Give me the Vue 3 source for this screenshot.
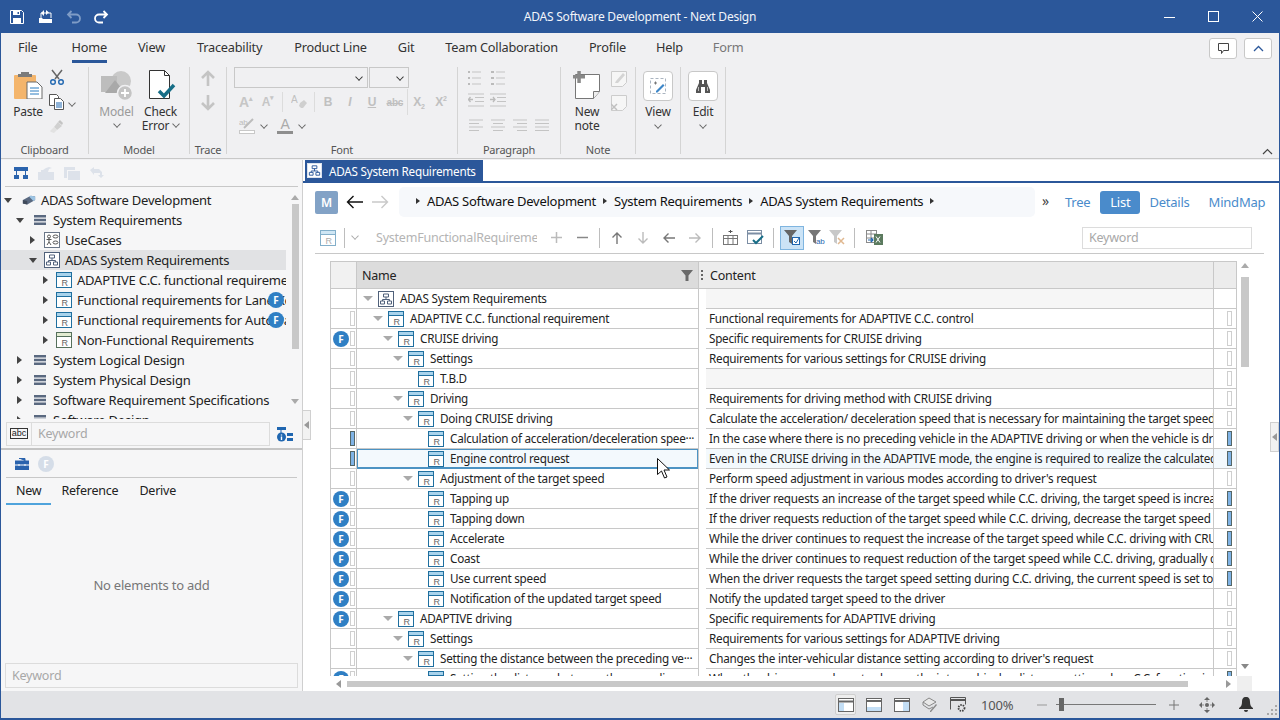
<script setup>
const tabs = ['File', 'Home', 'View', 'Traceability', 'Product Line', 'Git', 'Team Collaboration', 'Profile', 'Help', 'Form']

const tree = [
  { l: 0, icon: 'i-model', t: 'ADAS Software Development', a: 'down' },
  { l: 1, icon: 'i-list', t: 'System Requirements', a: 'down' },
  { l: 2, icon: 'i-usecase', t: 'UseCases', a: 'right' },
  { l: 2, icon: 'i-pkg', t: 'ADAS System Requirements', a: 'down', sel: true },
  { l: 3, icon: 'i-req', t: 'ADAPTIVE C.C. functional requirement', a: 'right' },
  { l: 3, icon: 'i-req', t: 'Functional requirements for Lane Keeping', a: 'right', f: true },
  { l: 3, icon: 'i-req', t: 'Functional requirements for Auto Parking', a: 'right', f: true },
  { l: 3, icon: 'i-reqg', t: 'Non-Functional Requirements', a: 'right' },
  { l: 1, icon: 'i-list', t: 'System Logical Design', a: 'right' },
  { l: 1, icon: 'i-list', t: 'System Physical Design', a: 'right' },
  { l: 1, icon: 'i-list', t: 'Software Requirement Specifications', a: 'right' },
  { l: 1, icon: 'i-list', t: 'Software Design', a: 'right' }
]

const rows = [
  { l: 0, n: 'ADAS System Requirements', c: '', arrow: 1, pkg: 1, noMark: 1 },
  { l: 1, n: 'ADAPTIVE C.C. functional requirement', c: 'Functional requirements for ADAPTIVE C.C. control', arrow: 1 },
  { l: 2, n: 'CRUISE driving', c: 'Specific requirements for CRUISE driving', arrow: 1, f: 1 },
  { l: 3, n: 'Settings', c: 'Requirements for various settings for CRUISE driving', arrow: 1 },
  { l: 4, n: 'T.B.D', c: '' },
  { l: 3, n: 'Driving', c: 'Requirements for driving method with CRUISE driving', arrow: 1 },
  { l: 4, n: 'Doing CRUISE driving', c: 'Calculate the acceleration/ deceleration speed that is necessary for maintaining the target speed', arrow: 1 },
  { l: 5, n: 'Calculation of acceleration/deceleration spee···', c: 'In the case where there is no preceding vehicle in the ADAPTIVE driving or when the vehicle is driving', mark: 1, rmark: 1 },
  { l: 5, n: 'Engine control request', c: 'Even in the CRUISE driving in the ADAPTIVE mode, the engine is required to realize the calculated speed', mark: 1, rmark: 1, sel: 1 },
  { l: 4, n: 'Adjustment of the target speed', c: "Perform speed adjustment in various modes according to driver's request", arrow: 1 },
  { l: 5, n: 'Tapping up', c: 'If the driver requests an increase of the target speed while C.C. driving, the target speed is increased', f: 1, rmark: 1 },
  { l: 5, n: 'Tapping down', c: 'If the driver requests reduction of the target speed while C.C. driving, decrease the target speed by', f: 1, rmark: 1 },
  { l: 5, n: 'Accelerate', c: 'While the driver continues to request the increase of the target speed while C.C. driving with CRUISE', f: 1, rmark: 1 },
  { l: 5, n: 'Coast', c: 'While the driver continues to request reduction of the target speed while C.C. driving, gradually decrease', f: 1, rmark: 1 },
  { l: 5, n: 'Use current speed', c: 'When the driver requests the target speed setting during C.C. driving, the current speed is set to the', f: 1, rmark: 1 },
  { l: 5, n: 'Notification of the updated target speed', c: 'Notify the updated target speed to the driver', f: 1 },
  { l: 2, n: 'ADAPTIVE driving', c: 'Specific requirements for ADAPTIVE driving', arrow: 1, f: 1 },
  { l: 3, n: 'Settings', c: 'Requirements for various settings for ADAPTIVE driving', arrow: 1 },
  { l: 4, n: 'Setting the distance between the preceding ve···', c: "Changes the inter-vehicular distance setting according to driver's request", arrow: 1 },
  { l: 5, n: 'Setting the distance between the preceding', c: 'When the driver uses a lever to change the inter-vehicular distance setting when C.C. function is ON', f: 1, rmark: 1 }
]
</script>

<template>
  <div class="app">
    <svg class="defs" width="0" height="0" aria-hidden="true">
      <symbol id="i-req" viewBox="0 0 16 16">
        <rect x=".5" y=".5" width="15" height="15" fill="#fff" stroke="#1f6f9f" />
        <rect x="1" y="1" width="14" height="3.5" fill="#a9d3ec" />
        <path d="M1 4.5h14" stroke="#1f6f9f" />
        <text x="5.4" y="13.6" font-size="9" fill="#666" font-family="Liberation Sans">R</text>
      </symbol>
      <symbol id="i-reqg" viewBox="0 0 16 16">
        <rect x=".5" y=".5" width="15" height="15" fill="#fff" stroke="#55705c" />
        <rect x="1" y="1" width="14" height="3.5" fill="#e3ecd2" />
        <path d="M1 4.5h14" stroke="#55705c" />
        <text x="5.4" y="13.6" font-size="9" fill="#666" font-family="Liberation Sans">R</text>
      </symbol>
      <symbol id="i-pkg" viewBox="0 0 16 16">
        <rect x=".5" y=".5" width="15" height="15" fill="#fff" stroke="#50617a" />
        <path d="M5.5 3h5v3h-5zM2.5 10h4v3h-4zM9.5 10h4v3h-4zM8 6v2.5M4.5 10V8.5h7V10" fill="none" stroke="#50617a" />
      </symbol>
      <symbol id="i-list" viewBox="0 0 14 14">
        <path d="M1 2h12v2.4H1zM1 5.8h12v2.4H1zM1 9.6h12V12H1z" fill="#5a6980" />
      </symbol>
      <symbol id="i-usecase" viewBox="0 0 16 16">
        <rect x=".5" y=".5" width="15" height="15" fill="#fff" stroke="#6a7688" />
        <circle cx="5" cy="4.5" r="1.5" fill="none" stroke="#555" />
        <path d="M2.5 7.5h5M5 6v4M3 13l2-3 2 3" fill="none" stroke="#555" />
        <ellipse cx="11.5" cy="4.5" rx="2.5" ry="1.5" fill="none" stroke="#555" />
        <ellipse cx="11.5" cy="10.5" rx="2.5" ry="1.5" fill="none" stroke="#555" />
      </symbol>
      <symbol id="i-model" viewBox="0 0 16 16">
        <path d="M1 8l9-5 5 1v4l-9 5-5-1z" fill="#5a6980" />
        <path d="M8 4l2-1 5 1v4l-2 1z" fill="#9cc4e4" />
        <path d="M1 8l5 1v4l-5-1z" fill="#404a5a" />
      </symbol>
    </svg>

    <header class="title">
      <div class="qa">
        <svg class="save" width="14" height="14" viewBox="0 0 14 14"><path d="M.5.5h11l2 2v11H.5z" fill="none" stroke="#fff" /><path d="M3 1h7v4H3zM3 8h8v5H3z" fill="#fff" /><path d="M7.500 2h1.500v2H7.500z" fill="#2b579a" /></svg>
        <svg width="15" height="14" viewBox="0 0 15 14"><path d="M1 8h3l1 1h9v4H1z" fill="#fff" /><path d="M3 8V3h5M10 3h3v5" fill="none" stroke="#fff" /><path d="M3 3l3-3v6z M8 0v5l3-2.500z" fill="#fff" /></svg>
        <svg class="dim" width="15" height="14" viewBox="0 0 15 14"><path d="M2 4.500h8a4 4 0 0 1 0 8H6M5.500 1L2 4.500 5.500 8" fill="none" stroke="#7f9cc6" stroke-width="1.800" /></svg>
        <svg width="15" height="14" viewBox="0 0 15 14"><path d="M13 4.500H5a4 4 0 0 0 0 8h4M9.500 1L13 4.500 9.500 8" fill="none" stroke="#fff" stroke-width="1.800" /></svg>
      </div>
      <div class="title-text">ADAS Software Development - Next Design</div>
      <div class="win">
        <svg width="11" height="11" viewBox="0 0 11 11"><path d="M0 6.500h11" stroke="#fff" /></svg>
        <svg width="11" height="11" viewBox="0 0 11 11"><rect x=".5" y=".5" width="10" height="10" fill="none" stroke="#fff" /></svg>
        <svg width="11" height="11" viewBox="0 0 11 11"><path d="M.5.5l10 10M10.500.5l-10 10" stroke="#fff" /></svg>
      </div>
    </header>

    <nav class="tabs">
      <span v-for="t in tabs" :key="t" class="tab" :class="{ on: t === 'Home', off: t === 'Form' }">{{ t }}</span>
      <span class="tabs-right">
        <button class="mini"><svg width="13" height="13" viewBox="0 0 13 13"><path d="M1.500 1.500h10v7h-5l-2 3v-3h-3z" fill="#fff" stroke="#444" /></svg></button>
        <button class="mini"><svg width="11" height="7" viewBox="0 0 11 7"><path d="M1 6l4.500-4.500L10 6" fill="none" stroke="#2b579a" stroke-width="1.300" /></svg></button>
      </span>
    </nav>

    <section class="ribbon">
      <div class="rg clip">
        <div class="rg-body">
          <div class="big paste">
            <svg width="29" height="29" viewBox="0 0 29 29"><rect x="0" y="5" width="22" height="24" rx="1" fill="#f4b56c" /><path d="M7 2h8v2h3v3H4V4h3z" fill="#7b7b7b" /><path d="M13 12h10l5 5v12H13z" fill="#fff" stroke="#6b6b6b" /><path d="M16 18h9M16 21h9M16 24h9" stroke="#2b7cc0" /></svg>
            <span>Paste</span>
          </div>
          <div class="small-col">
            <svg width="16" height="16" viewBox="0 0 16 16"><path d="M3 1l7 9M13 1L6 10" stroke="#666" stroke-width="1.500" /><circle cx="4" cy="13" r="2.300" fill="none" stroke="#1f66b0" stroke-width="1.400" /><circle cx="12" cy="13" r="2.300" fill="none" stroke="#1f66b0" stroke-width="1.400" /></svg>
            <span class="with-chev"><svg width="16" height="16" viewBox="0 0 16 16"><path d="M.5.5h7l2 2v9H.5z" fill="#fff" stroke="#555" /><path d="M5.500 4.500h6l3 3v8h-9z" fill="#fff" stroke="#555" /><path d="M7 9h6M7 11h6M7 13h6" stroke="#1f66b0" /></svg><i class="chev"></i></span>
            <svg width="16" height="16" viewBox="0 0 16 16"><path d="M9 3l4 4-5 4-3-3z" fill="#d0d0d0" /><path d="M5 8l3 3-3 3-3-1-1-1z" fill="#e2e2e2" /><path d="M11 1l3 3-1 2-4-3z" fill="#c4c4c4" /></svg>
          </div>
        </div>
        <div class="rg-label">Clipboard</div>
      </div>

      <div class="rg model">
        <div class="rg-body">
          <div class="big dis">
            <svg width="32" height="32" viewBox="0 0 32 32"><circle cx="20" cy="12" r="10" fill="#c9c9c9" /><path d="M0 7h16v16H0z" fill="#bdbdbd" /><path d="M14 11l10 13H4z" fill="#a9a9a9" /><circle cx="24" cy="24" r="7.500" fill="#c4c4c4" stroke="#f0f0f2" stroke-width="1.500" /><path d="M24 20v8M20 24h8" stroke="#fff" stroke-width="1.800" /></svg>
            <span>Model</span><i class="chev"></i>
          </div>
          <div class="big check">
            <svg width="30" height="32" viewBox="0 0 30 32"><path d="M3.500 1.500h15l5 5v23h-20z" fill="#fff" stroke="#333" /><path d="M18.500 1.500v5h5" fill="none" stroke="#333" /><path d="M13 22l5 5 10-11" fill="none" stroke="#176e87" stroke-width="3.500" /></svg>
            <span>Check</span><span class="err">Error <i class="chev inl"></i></span>
          </div>
        </div>
        <div class="rg-label">Model</div>
      </div>

      <div class="rg trace">
        <div class="rg-body">
          <div class="arrows">
            <svg width="14" height="17" viewBox="0 0 14 17"><path d="M7 16V2M1 8l6-6 6 6" fill="none" stroke="#c4c4c4" stroke-width="2.600" /></svg>
            <svg width="14" height="17" viewBox="0 0 14 17"><path d="M7 1v14M1 9l6 6 6-6" fill="none" stroke="#c4c4c4" stroke-width="2.600" /></svg>
          </div>
        </div>
        <div class="rg-label">Trace</div>
      </div>

      <div class="rg font">
        <div class="rg-body col">
          <div class="combos">
            <div class="combo c1"><i class="chev dark"></i></div>
            <div class="combo c2"><i class="chev dark"></i></div>
          </div>
          <div class="frow">
            <span class="gly big-a">A<sup>▴</sup></span>
            <span class="gly small-a">A<sup>▾</sup></span>
            <span class="vsep"></span>
            <svg class="eraser" width="16" height="16" viewBox="0 0 16 16"><path d="M9 9l4-3 3 3-4 5h-2l-2-2z" fill="#cfcfcf" /><text x="0" y="9" font-size="10" fill="#c0c0c0" font-family="Liberation Sans">A</text></svg>
            <span class="vsep v2"></span>
            <b class="fmt">B</b><em class="fmt">I</em><u class="fmt">U</u><s class="fmt abc">abc</s>
            <span class="fmt">X<sub>2</sub></span><span class="fmt">X<sup>2</sup></span>
          </div>
          <div class="frow third">
            <svg width="16" height="16" viewBox="0 0 16 16"><text x="0" y="7" font-size="8" fill="#bcbcbc" font-family="Liberation Sans">ab</text><path d="M5 10l9-9" stroke="#bcbcbc" stroke-width="2" /><rect x=".5" y="12.500" width="15" height="3" fill="#fff" stroke="#c8c8c8" /></svg>
            <i class="chev"></i>
            <span class="font-color"><span>A</span><i></i></span>
            <i class="chev"></i>
          </div>
        </div>
        <div class="rg-label">Font</div>
      </div>

      <div class="rg para">
        <div class="rg-body col">
          <div class="prow p1">
            <svg width="14" height="16" viewBox="0 0 14 16"><path d="M0 2h2M0 8h2M0 14h2" stroke="#bbb" stroke-width="2" /><path d="M4 2h9M4 8h9M4 14h9" stroke="#c4c4c4" /></svg>
            <svg width="14" height="16" viewBox="0 0 14 16"><path d="M0 2h3M0 8h3M0 14h3" stroke="#bbb" stroke-width="2" /><path d="M5 2h9M5 8h9M5 14h9" stroke="#c4c4c4" /></svg>
          </div>
          <div class="prow p2">
            <svg width="16" height="14" viewBox="0 0 16 14"><path d="M0 1h16M7 4.500h9M7 8.500h9M0 13h16" stroke="#c4c4c4" /><path d="M5 6.500H0M2.500 4l-2 2.500 2 2.500" fill="none" stroke="#bbb" stroke-width="1.300" /></svg>
            <svg width="16" height="14" viewBox="0 0 16 14"><path d="M0 1h16M7 4.500h9M7 8.500h9M0 13h16" stroke="#c4c4c4" /><path d="M0 6.500h5M3 4l2 2.500L3 9" fill="none" stroke="#bbb" stroke-width="1.300" /></svg>
          </div>
          <div class="prow aligns">
            <svg v-for="p in ['M0 1h14M0 4.500h10M0 8h14M0 11.500h10','M0 1h14M2 4.500h10M0 8h14M2 11.500h10','M0 1h14M4 4.500h10M0 8h14M4 11.500h10','M0 1h14M0 4.500h14M0 8h14M0 11.500h14']" :key="p" width="14" height="12" viewBox="0 0 14 12"><path :d="p" stroke="#c4c4c4" /></svg>
          </div>
        </div>
        <div class="rg-label">Paragraph</div>
      </div>

      <div class="rg note">
        <div class="rg-body">
          <div class="big">
            <svg width="28" height="28" viewBox="0 0 28 28"><path d="M2.500 3.500h24v17l-6 7h-18z" fill="#fff" stroke="#777" /><path d="M20.500 27.500v-7h6" fill="#eee" stroke="#777" /><path d="M0 4h12v3.500H0z M4.300 0h3.500v12H4.300z" fill="#888" /></svg>
            <span>New</span><span>note</span>
          </div>
          <div class="note-small">
            <svg width="16" height="16" viewBox="0 0 16 16"><path d="M.5.500h15v11l-4 4H.5z" fill="#f6f6f6" stroke="#ccc" /><path d="M5 10l7-8 2 2-7 8H4z" fill="#d4d4d4" /></svg>
            <svg width="16" height="16" viewBox="0 0 16 16"><path d="M.5.500h15v11l-4 4H.5z" fill="#f6f6f6" stroke="#ccc" /><path d="M0 9l6 6M6 9l-6 6" stroke="#c0c0c0" stroke-width="1.500" /></svg>
          </div>
        </div>
        <div class="rg-label">Note</div>
      </div>

      <div class="rg drop">
        <div class="rg-body">
          <div class="big">
            <button class="drop-btn"><svg width="16" height="16" viewBox="0 0 16 16"><rect x=".5" y=".5" width="15" height="15" fill="none" stroke="#aab4c0" stroke-dasharray="3 2" /><path d="M4 5h3M5.500 3.500v3" stroke="#777" /><path d="M6 13l7-7 1.500 1.500-7 7H6z" fill="#3c86c8" /></svg></button>
            <span>View</span><i class="chev"></i>
          </div>
        </div>
      </div>

      <div class="rg drop">
        <div class="rg-body">
          <div class="big">
            <button class="drop-btn"><svg width="16" height="16" viewBox="0 0 16 16"><path d="M4 2h3v4h2V2h3v3l3 7v3h-5V9H6v6H1v-3l3-7z" fill="#555" /><path d="M3.500 9v4M12.500 9v4" stroke="#bbb" /></svg></button>
            <span>Edit</span><i class="chev"></i>
          </div>
        </div>
      </div>
      <svg class="collapse-up" width="11" height="7" viewBox="0 0 11 7"><path d="M1 6l4.500-4.500L10 6" fill="none" stroke="#444" stroke-width="1.200" /></svg>
    </section>

    <main class="main">
      <aside class="lpane">
        <div class="ltools">
          <svg width="14" height="13" viewBox="0 0 14 13"><path d="M0 0h14v4H0zM0 8h5v4H0zM9 8h5v4H9zM2 4h1v4H2zM11 4h1v4h-1z" fill="#2a63ad" /></svg>
          <svg width="16" height="14" viewBox="0 0 16 14"><path d="M0 6h3V4h2l3-2 3-1 3 1-3 1-1 3h6v8H0z" fill="#dde2ea" /></svg>
          <svg width="16" height="14" viewBox="0 0 16 14"><path d="M0 1h11v3H0zM0 4h3v8H0z" fill="#dde2ea" /><rect x="4" y="5" width="12" height="9" fill="#dde2ea" /></svg>
          <svg width="14" height="14" viewBox="0 0 14 14"><path d="M0 4l4-3v2h5l3 3v3h2l-3 3-3-3h2V7H4v2z" fill="#dde2ea" /></svg>
        </div>
        <div class="tree-wrap">
          <div class="tree">
            <div v-for="r in tree" :key="r.t" class="trow" :class="[`lv${r.l}`, { sel: r.sel }]">
              <i class="tri" :class="r.a"></i>
              <svg class="ticon" width="16" height="16"><use :href="`#${r.icon}`" /></svg>
              <span class="ttext">{{ r.t }}</span>
              <span v-if="r.f" class="fb tree-fb">F</span>
            </div>
          </div>
          <div class="vbar">
            <i class="tri up"></i><div class="thumb"></div><i class="tri down grey"></i>
          </div>
        </div>
        <div class="search">
          <div class="sbox">
            <span class="abc"><span>abc</span></span>
            <span class="ph">Keyword</span>
          </div>
          <svg width="16" height="16" viewBox="0 0 16 16"><path d="M0 1h9v3H0zM10 7h6v3h-6zM10 12h6v3h-6z" fill="#1f66b0" /><path d="M4 4v3" stroke="#1f66b0" /><circle cx="4.500" cy="11" r="4.500" fill="#1f66b0" /><path d="M4.500 8.500v1M4.500 10.500v3.500" stroke="#fff" stroke-width="1.400" /></svg>
        </div>
        <div class="ptools">
          <svg width="14" height="13" viewBox="0 0 14 13"><path d="M0 4h14v9H0zM4 1.500h6v2.500M0 8h14" fill="#2a63ad" stroke="#2a63ad" /><path d="M3 8h2M9 8h2M0 8h14" stroke="#fff" /></svg>
          <span class="fb faint">F</span>
        </div>
        <div class="ptabs">
          <span class="on">New</span><span>Reference</span><span>Derive</span>
        </div>
        <div class="empty">No elements to add</div>
        <div class="kw"><span class="ph">Keyword</span></div>
      </aside>

      <section class="rpane">
        <div class="doc-tabs"><div class="doc-tab">
          <svg width="15" height="15" viewBox="0 0 16 16"><rect x=".5" y=".5" width="15" height="15" fill="#fff" stroke="#dfe6f0" /><path d="M5.500 3h5v3h-5zM2.500 10h4v3h-4zM9.500 10h4v3h-4zM8 6v2.500M4.500 10V8.500h7V10" fill="none" stroke="#2b579a" /></svg>
          <span>ADAS System Requirements</span>
        </div></div>

        <div class="crumb-row">
          <span class="m">M</span>
          <svg class="nav-a" width="17" height="14" viewBox="0 0 17 14"><path d="M17 7H1.500M7.500 1l-6 6 6 6" fill="none" stroke="#111" stroke-width="1.400" /></svg>
          <svg class="nav-b" width="17" height="14" viewBox="0 0 17 14"><path d="M0 7h15.500M9.500 1l6 6-6 6" fill="none" stroke="#c9c9c9" stroke-width="1.400" /></svg>
          <div class="crumbs">
            <i class="tri right small"></i><span>ADAS Software Development</span>
            <i class="tri right small"></i><span>System Requirements</span>
            <i class="tri right small"></i><span>ADAS System Requirements</span>
            <i class="tri right small"></i>
          </div>
          <span class="more">»</span>
          <div class="views">
            <span class="tree-v">Tree</span><span class="pill">List</span><span class="det">Details</span><span class="mm">MindMap</span>
          </div>
        </div>

        <div class="toolbar">
          <svg class="tb-r" width="16" height="16"><use href="#i-req" opacity=".55" /></svg>
          <span class="tsep s1"></span>
          <i class="chev"></i>
          <span class="sf">SystemFunctionalRequireme</span>
          <svg class="pm plus" width="11" height="11" viewBox="0 0 11 11"><path d="M5.500 0v11M0 5.500h11" stroke="#bbb" stroke-width="1.500" /></svg>
          <svg class="pm minus" width="11" height="11" viewBox="0 0 11 11"><path d="M0 5.500h11" stroke="#888" stroke-width="1.500" /></svg>
          <span class="tsep s2"></span>
          <div class="arr">
            <svg width="12" height="12" viewBox="0 0 12 12"><path d="M6 12V1M1.500 5.500L6 1l4.500 4.500" fill="none" stroke="#777" stroke-width="1.400" /></svg>
            <svg width="12" height="12" viewBox="0 0 12 12"><path d="M6 0v11M1.500 6.500L6 11l4.500-4.500" fill="none" stroke="#bbb" stroke-width="1.400" /></svg>
            <svg width="12" height="12" viewBox="0 0 12 12"><path d="M12 6H1M5.500 1.500L1 6l4.500 4.500" fill="none" stroke="#777" stroke-width="1.400" /></svg>
            <svg width="12" height="12" viewBox="0 0 12 12"><path d="M0 6h11M6.500 1.500L11 6l-4.500 4.500" fill="none" stroke="#bbb" stroke-width="1.400" /></svg>
          </div>
          <span class="tsep s3"></span>
          <div class="t-ic">
            <svg width="15" height="15" viewBox="0 0 15 15"><path d="M7.500 0v3M5.500 1.500h4" stroke="#555" /><rect x=".5" y="5.500" width="14" height="9" fill="none" stroke="#777" /><path d="M.5 8.500h14M5 5.500v9M10 5.500v9" stroke="#777" /></svg>
            <svg width="17" height="15" viewBox="0 0 17 15"><rect x=".5" y=".5" width="14" height="13" fill="#fff" stroke="#7c8ea4" /><path d="M.5 3.500h14" stroke="#7c8ea4" stroke-width="2" /><path d="M6 10l3 3 7-7" fill="none" stroke="#176e87" stroke-width="2" /></svg>
          </div>
          <span class="tsep s4"></span>
          <div class="t-ic f">
            <span class="fsel"><svg width="17" height="15" viewBox="0 0 17 15"><path d="M0 0h13L8 6v8l-3-2V6z" fill="#666" /><rect x="8.500" y="7.500" width="7" height="7" fill="#fff" stroke="#1f66b0" /><path d="M10 11l2 2 3-5" fill="none" stroke="#1f66b0" /></svg></span>
            <svg width="17" height="15" viewBox="0 0 17 15"><path d="M0 0h13L8 6v8l-3-2V6z" fill="#777" /><text x="8" y="14" font-size="8" fill="#1f66b0" font-family="Liberation Sans">ab</text></svg>
            <svg width="17" height="15" viewBox="0 0 17 15"><path d="M0 0h13L8 6v8l-3-2V6z" fill="#c8c8c8" /><path d="M9 8l6 6M15 8l-6 6" stroke="#e0b890" stroke-width="1.500" /></svg>
          </div>
          <span class="tsep s5"></span>
          <svg class="xl" width="17" height="15" viewBox="0 0 17 15"><rect x=".5" y=".5" width="10" height="12" fill="#fff" stroke="#8a8a8a" /><path d="M.5 4h10M.5 8h10M5 .5v12" stroke="#8a8a8a" /><path d="M2 10h5M5 8l2 2-2 2" fill="none" stroke="#1f66b0" stroke-width="1.200" /><rect x="8" y="4" width="9" height="11" fill="#5b7a5e" /><path d="M10 6.500l4 6M14 6.500l-4 6" stroke="#fff" /></svg>
          <div class="kbox"><span class="ph">Keyword</span></div>
        </div>

        <div class="table-area">
          <div class="table-main">
            <div class="grid">
              <div class="ghead">
                <div class="h0"></div>
                <div class="h1"><span>Name</span><svg width="12" height="12" viewBox="0 0 12 12"><path d="M0 1h12L7.500 6.500V12h-3V6.500z" fill="#6a6a6a" /></svg></div>
                <div class="h2"><i></i><i></i><i></i></div>
                <div class="h3">Content</div>
                <div class="h4"></div>
              </div>
              <div class="gbody">
                <div v-for="(r, i) in rows" :key="i" class="grow" :class="{ sel: r.sel }">
                  <div class="c0">
                    <span v-if="r.f" class="fb">F</span>
                    <span v-if="!r.noMark" class="mark" :class="{ blue: r.mark }"></span>
                  </div>
                  <div class="c1n" :style="{ paddingLeft: 10 * r.l + 10 + 'px' }">
                    <span class="tri-slot"><i v-if="r.arrow" class="tgl"></i></span>
                    <svg width="16" height="16"><use :href="r.pkg ? '#i-pkg' : '#i-req'" /></svg>
                    <span class="nm">{{ r.n }}</span>
                  </div>
                  <div class="c2"></div>
                  <div class="c3" :class="{ blank: !r.c }"><span>{{ r.c }}</span></div>
                  <div class="c4"><span v-if="!r.noMark" class="mark" :class="{ blue: r.rmark }"></span></div>
                </div>
              </div>
            </div>
            <div class="tscroll">
              <i class="tri up grey"></i><div class="thumb"></div><i class="tri down dark"></i>
            </div>
          </div>
          <div class="hscroll">
            <i class="tri left grey"></i><div class="hthumb"></div><i class="tri right grey"></i><span class="corner"></span>
          </div>
        </div>
        <span class="side-btn"><i class="tri left grey"></i></span>
      </section>
      <span class="split-btn"><i class="tri left grey"></i></span>
    </main>

    <footer class="status">
      <span class="st-btn active"><svg width="16" height="14" viewBox="0 0 16 14"><rect x=".5" y=".5" width="15" height="13" fill="#fff" stroke="#666" /><path d="M.5 3.500h15" stroke="#666" stroke-width="2" /><rect x="1" y="5" width="5" height="8" fill="#c3def5" /></svg></span>
      <svg class="st2" width="16" height="14" viewBox="0 0 16 14"><rect x=".5" y=".5" width="15" height="13" fill="#fff" stroke="#666" /><path d="M.5 3h15" stroke="#666" stroke-width="2" /><rect x="1" y="9" width="14" height="4" fill="#c3def5" /></svg>
      <svg class="st3" width="16" height="14" viewBox="0 0 16 14"><rect x=".5" y=".5" width="15" height="13" fill="#fff" stroke="#666" /><path d="M.5 3h15" stroke="#666" stroke-width="2" /><rect x="9" y="4" width="6" height="9" fill="#c3def5" /></svg>
      <svg class="st4" width="16" height="16" viewBox="0 0 16 16"><path d="M1 5l6-4 7 4-7 4z" fill="#e8e8e8" stroke="#888" /><path d="M1 8l6 4 4-2M1 5v3" fill="none" stroke="#888" /><path d="M8 14l6-7 1 1-6 7H8z" fill="#888" /></svg>
      <svg class="st5" width="17" height="15" viewBox="0 0 17 15"><path d="M.5 12.500V.5h15v7" fill="none" stroke="#555" /><path d="M.5 3h15" stroke="#555" stroke-width="2" /><circle cx="11.500" cy="11" r="3" fill="none" stroke="#444" stroke-width="1.800" stroke-dasharray="1.500 1" /></svg>
      <span class="pct">100%</span>
      <svg class="zm" width="10" height="10" viewBox="0 0 10 10"><path d="M0 5h10" stroke="#999" /></svg>
      <span class="slider"><i></i></span>
      <svg class="zp" width="10" height="10" viewBox="0 0 10 10"><path d="M0 5h10M5 0v10" stroke="#777" /></svg>
      <svg class="st6" width="16" height="16" viewBox="0 0 16 16"><path d="M8 0l3 3H5zM8 16l-3-3h6zM0 8l3-3v6zM16 8l-3 3V5z" fill="#666" /><circle cx="8" cy="8" r="2" fill="#666" /><path d="M8 3v2M8 11v2M3 8h2M11 8h2" stroke="#888" /></svg>
      <svg class="st7" width="14" height="15" viewBox="0 0 14 15"><path d="M7 0c3 0 4 2 4 5s1 5 3 6v1H0v-1c2-1 3-3 3-6s1-5 4-5z" fill="#333" /><path d="M5 13h4a2 2 0 0 1-4 0z" fill="#333" /></svg>
      <svg class="grip" width="11" height="11" viewBox="0 0 11 11"><path d="M9 1h2v2H9zM5 5h2v2H5zM9 5h2v2H9zM1 9h2v2H1zM5 9h2v2H5zM9 9h2v2H9z" fill="#a8a8a8" /></svg>
    </footer>

    <svg class="cursor" width="13" height="21" viewBox="0 0 13 21"><path d="M.5.500v16l4-3.500 3 7 2.500-1-3-7h5.500z" fill="#fff" stroke="#111" /></svg>
  </div>
</template>

<style scoped>
.app { position: relative; width: 1280px; height: 720px; box-sizing: border-box; display: flex; flex-direction: column; border: solid #2b579a; border-width: 0 1px 2px 1px; background: #f0f0f2; overflow: hidden; font-family: "Noto Sans", sans-serif; font-size: 12px; letter-spacing: -.22px; color: #222; }
.defs { position: absolute; }
button { padding: 0; font: inherit; }
i { display: block; font-style: normal; }

.title { height: 33px; flex: none; background: #2b579a; display: grid; grid-template-columns: 1fr auto 1fr; align-items: center; color: #fff; }
.qa { display: flex; gap: 13px; padding-left: 9px; align-items: center; }
.qa svg { display: block; }
.qa .save { margin-right: 1px; }
.title-text { font-size: 12px; color: #f2f5fa; }
.win { display: flex; gap: 33px; justify-content: flex-end; align-items: center; padding-right: 16px; }

.tabs { height: 32px; flex: none; display: flex; align-items: flex-start; padding-left: 17px; gap: 31px; font-size: 12.750px; background: #f0f0f2; }
.tab { position: relative; line-height: 28px; color: #333; }
.tab:nth-child(2) { margin-left: 3px; }
.tab:nth-child(4) { margin-left: 1px; }
.tab:nth-child(5) { margin-left: 1px; }
.tab:nth-child(9) { margin-left: -1px; }
.tab:nth-child(10) { margin-left: -1px; }
.tab.off { color: #777; }
.tab.on::after { content: ""; position: absolute; left: 0; right: 0; bottom: -2px; height: 3px; background: #2b579a; }
.tabs-right { margin-left: auto; display: flex; gap: 7px; padding: 5px 7px 0 0; }
.mini { width: 28px; height: 21px; border: 1px solid #c8c8c8; border-radius: 3px; background: #fff; display: flex; align-items: center; justify-content: center; }

.ribbon { position: relative; height: 94px; flex: none; display: flex; border-bottom: 1px solid #c8c8c8; padding-top: 2px; box-sizing: border-box; }
.rg { display: flex; flex-direction: column; height: 87px; border-right: 1px solid #d4d4d4; box-sizing: border-box; flex: none; }
.rg-body { flex: 1; display: flex; min-height: 0; }
.rg-body.col { flex-direction: column; }
.rg-label { height: 11px; line-height: 14px; text-align: center; font-size: 11px; color: #555; }
.big { display: flex; flex-direction: column; align-items: center; font-size: 12px; line-height: 14px; color: #333; }
.big svg { display: block; flex: none; margin-bottom: 4px; }
.big.dis { color: #9a9a9a; }
.chev { width: 6px; height: 6px; box-sizing: border-box; border: solid #666; border-width: 0 1px 1px 0; transform: rotate(45deg) scale(.9); margin-top: 2px; flex: none; }
.chev.inl { display: inline-block; margin: 0 0 3px 1px; }
.chev.dark { border-color: #333; border-width: 0 1.5px 1.500px 0; }
.err { white-space: nowrap; }

.clip { width: 88px; padding-left: 12px; }
.paste { width: 30px; padding-top: 3px; }
.paste svg { margin-bottom: 6px; }
.small-col { display: flex; flex-direction: column; margin-left: 6px; padding-top: 2px; gap: 9px; }
.small-col svg { display: block; flex: none; }
.with-chev { display: flex; align-items: center; gap: 4px; }
.clip .rg-label { margin-left: -12px; }

.model { width: 101px; }
.model .rg-body { padding: 2px 0 0 11px; gap: 11px; }
.model .big { width: 33px; }
.check { width: 34px; }

.trace { width: 37px; }
.arrows { display: flex; flex-direction: column; gap: 7px; padding: 3px 0 0 11px; }
.arrows svg { display: block; }

.font { width: 231px; }
.font .rg-body { padding: 0 0 0 7px; }
.combos { display: flex; gap: 1px; flex: none; }
.combo { height: 21px; box-sizing: border-box; border: 1px solid #c8c8c8; display: flex; align-items: center; justify-content: flex-end; padding: 0 5px 3px 0; }
.combo.c1 { width: 134px; }
.combo.c2 { width: 40px; }
.frow { display: flex; align-items: center; height: 26px; margin-top: 1px; color: #c4c4c4; padding-left: 5px; flex: none; }
.gly { font-weight: 700; color: #c6c6c6; font-family: "Liberation Sans", sans-serif; line-height: 1; }
.gly sup { font-size: 7px; vertical-align: 6px; line-height: 0; }
.big-a { font-size: 14px; }
.small-a { font-size: 12px; margin-left: 9px; }
.vsep { width: 1px; height: 20px; background: #dcdcdc; margin: 0 8px 0 8px; flex: none; }
.vsep.v2 { margin: 0 2px 0 7px; }
.eraser { display: block; flex: none; }
.fmt { font-family: "Liberation Sans", sans-serif; font-size: 12px; font-weight: 700; width: 22px; text-align: center; color: #c0c0c0; flex: none; }
.fmt.abc { font-size: 10px; }
.fmt sub, .fmt sup { font-size: 7px; line-height: 0; }
.third { height: 22px; margin-top: 0; }
.third .chev { margin: 0 8px 2px 6px; }
.font-color { width: 16px; display: flex; flex-direction: column; align-items: center; margin-left: 2px; font-family: "Liberation Sans", sans-serif; font-size: 14px; line-height: 13px; color: #aaa; }
.font-color i { width: 16px; height: 3px; background: #8e8e8e; }

.para { width: 103px; }
.prow { display: flex; gap: 8px; padding-left: 10px; align-items: center; flex: none; }
.p1 { height: 21px; gap: 9px; }
.p2 { height: 24px; gap: 6px; }
.aligns { height: 26px; padding-left: 11px; }

.note { width: 75px; }
.note .rg-body { padding: 4px 0 0 12px; gap: 10px; }
.note .big { width: 28px; }
.note .big svg { margin-bottom: 6px; }
.note-small { display: flex; flex-direction: column; gap: 8px; }
.note-small svg { display: block; flex: none; }

.drop { width: 45px; }
.drop .big { width: 100%; padding-top: 4px; }
.drop .big .chev { margin-top: 3px; }
.drop-btn { width: 30px; height: 30px; flex: none; box-sizing: border-box; border: 1px solid #c8c8c8; border-radius: 4px; background: #fff; display: flex; align-items: center; justify-content: center; margin-bottom: 4px; }
.drop-btn svg { margin: 0; }
.collapse-up { position: absolute; right: 6px; bottom: 3px; }

.main { flex: 1; min-height: 0; display: flex; margin-top: 1px; position: relative; background: #fff; }
.lpane { width: 301px; flex: none; background: #f6f6f7; border-right: 1px solid #cfcfcf; display: flex; flex-direction: column; box-sizing: content-box; }
.ltools { height: 27px; margin: 0 4px 0 4px; border-bottom: 1px solid #c8c8c8; display: flex; align-items: center; gap: 10px; padding-left: 9px; box-sizing: border-box; flex: none; }
.tree-wrap { height: 232px; display: flex; flex: none; }
.tree { width: 286px; padding-top: 3px; overflow: hidden; }
.trow { height: 20px; display: flex; align-items: center; position: relative; white-space: nowrap; overflow: hidden; font-size: 13px; }
.trow.sel { background: #e1e2e4; }
.lv0 { padding-left: 3px; }
.lv1 { padding-left: 15px; }
.lv2 { padding-left: 28px; }
.lv3 { padding-left: 41px; }
.ticon { flex: none; display: block; margin-right: 5px; }
.lv0 .ticon { width: 14px; height: 14px; margin-left: 10px; }
.lv1 .ticon { width: 14px; height: 14px; margin-left: 9px; margin-right: 6px; }
.lv2 .ticon { margin-left: 7px; }
.lv3 .ticon { margin-left: 6px; }
.tri { width: 0; height: 0; flex: none; border-style: solid; border-color: transparent; }
.tri.right { border-width: 4px 0 4px 5px; border-left-color: #444; margin-right: 2px; margin-left: 1px; }
.tri.down { border-width: 5px 4px 0 4px; border-top-color: #444; margin-right: 0; }
.tri.left { border-width: 4px 5px 4px 0; border-right-color: #999; }
.tri.up { border-width: 0 4px 5px 4px; border-bottom-color: #aaa; }
.tri.grey.down { border-top-color: #aaa; }
.tri.grey.right { border-left-color: #999; }
.tri.dark.down { border-top-color: #888; }
.tri.small { border-width: 3px 0 3px 4px; border-left-color: #333; }
.ttext { flex: none; }
.fb { display: inline-flex; width: 16px; height: 16px; border-radius: 50%; background: #2f7fc4; color: #fff; align-items: center; justify-content: center; font-size: 10px; font-weight: 700; flex: none; letter-spacing: 0; }
.tree-fb { position: absolute; right: 2px; top: 2px; }
.faint { background: #d5dde8; color: #fff; }
.vbar { width: 16px; display: flex; flex-direction: column; align-items: center; padding: 8px 0 0 2px; box-sizing: border-box; }
.vbar .thumb { width: 7px; height: 145px; background: #c8c8c8; margin: 4px 0 50px; flex: none; }
.search { height: 29px; display: flex; align-items: center; gap: 7px; padding: 0 5px; border-bottom: 2px solid #c4c4c4; box-sizing: content-box; flex: none; }
.sbox { width: 264px; height: 24px; box-sizing: border-box; border: 1px solid #dcdcdc; display: flex; align-items: center; background: #f6f6f7; margin-right: 0; flex: none; }
.abc { width: 24px; height: 100%; display: flex; align-items: center; justify-content: center; border-right: 1px solid #dcdcdc; font-size: 9px; flex: none; }
.abc span { border: 1px solid #333; padding: 0 1px; line-height: 9px; font-family: "Liberation Sans", sans-serif; letter-spacing: 0; }
.ph { color: #a8a8a8; font-size: 12.500px; padding-left: 6px; }
.ptools { height: 28px; margin: 0 5px; display: flex; align-items: center; gap: 9px; padding-left: 9px; border-bottom: 1px solid #c8c8c8; box-sizing: border-box; flex: none; }
.ptabs { height: 27px; display: flex; padding-left: 5px; flex: none; font-size: 12.500px; align-items: stretch; }
.ptabs span { padding: 4px 10px 0; box-sizing: border-box; margin-right: 1px; }
.ptabs .on { border-bottom: 2px solid #4fa3dc; padding: 4px 10px 0; margin-right: 0; }
.empty { flex: 1; display: flex; align-items: center; justify-content: center; color: #777; font-size: 13px; padding-top: 2px; }
.kw { height: 25px; margin: 0 4px 3px; box-sizing: border-box; border: 1px solid #dcdcdc; display: flex; align-items: center; flex: none; }

.rpane { flex: 1; min-width: 0; display: flex; flex-direction: column; position: relative; background: #fff; }
.doc-tabs { height: 23px; flex: none; border-bottom: 2px solid #2b579a; box-sizing: border-box; padding-left: 2px; }
.doc-tab { width: 178px; height: 21px; background: #2b579a; color: #fff; display: flex; align-items: center; gap: 7px; padding-left: 2px; box-sizing: border-box; font-size: 11.700px; letter-spacing: -.24px; white-space: nowrap; }
.doc-tab svg { display: block; flex: none; }
.crumb-row { height: 30px; margin-top: 4px; display: flex; align-items: center; flex: none; padding-left: 12px; }
.m { width: 23px; height: 23px; background: #82a2c6; color: #fff; display: flex; align-items: center; justify-content: center; border-radius: 2px; font-size: 12px; font-weight: 600; flex: none; }
.nav-a { margin-left: 8px; display: block; flex: none; }
.nav-b { margin-left: 9px; display: block; flex: none; }
.crumbs { width: 636px; height: 30px; margin-left: 10px; background: #f6f8fb; border-radius: 5px; display: flex; align-items: center; font-size: 13px; letter-spacing: -.27px; padding: 0 0 2px 17px; box-sizing: border-box; color: #111; white-space: nowrap; flex: none; }
.crumbs .tri { margin: 0 7px 0 0; }
.crumbs span { margin-right: 7px; }
.more { margin-left: 7px; font-size: 14px; color: #444; margin-top: -4px; }
.views { display: flex; align-items: center; margin-left: 16px; color: #4a8bcb; font-size: 13px; }
.pill { width: 40px; height: 23px; background: #4a8bcb; color: #fff; border-radius: 3px; display: flex; align-items: center; justify-content: center; margin: 0 9px 0 10px; }
.mm { margin-left: 19px; }

.toolbar { height: 31px; margin: 5px 15px 0 12px; border-bottom: 1px solid #c8c8c8; display: flex; align-items: center; flex: none; box-sizing: content-box; }
.tb-r { margin-left: 5px; flex: none; display: block; }
.tsep { width: 1px; height: 20px; background: #bdbdbd; flex: none; }
.s1 { margin-left: 8px; }
.toolbar .chev { margin: 0 0 3px 7px; border-color: #aaa; }
.sf { width: 161px; margin-left: 18px; overflow: hidden; white-space: nowrap; color: #b4b4b4; font-size: 12.500px; flex: none; }
.pm { flex: none; display: block; }
.plus { margin-left: 14px; }
.minus { margin-left: 15px; }
.s2 { margin-left: 11px; }
.arr { display: flex; gap: 14px; margin-left: 11px; }
.arr svg { display: block; }
.s3 { margin-left: 11px; }
.t-ic { display: flex; align-items: center; gap: 9px; margin-left: 10px; }
.t-ic svg { display: block; flex: none; }
.s4 { margin-left: 9px; }
.t-ic.f { margin-left: 6px; gap: 4px; }
.fsel { width: 24px; height: 24px; box-sizing: border-box; background: #cbe3f6; border: 1px solid #7fb5e0; display: flex; align-items: center; justify-content: center; }
.s5 { margin-left: 8px; }
.xl { margin-left: 11px; display: block; flex: none; }
.kbox { width: 170px; height: 22px; box-sizing: border-box; border: 1px solid #dcdcdc; margin-left: auto; margin-right: 12px; display: flex; align-items: center; }

.table-area { margin: 7px 0 0 27px; flex: 1; min-height: 0; display: flex; flex-direction: column; width: 922px; }
.table-main { flex: 1; min-height: 0; display: flex; }
.grid { width: 907px; flex: none; display: flex; flex-direction: column; border-left: 1px solid #c8c8c8; border-top: 1px solid #c8c8c8; box-sizing: border-box; overflow: hidden; }
.ghead, .grow { display: grid; grid-template-columns: 26px 341px 8px 507px 24px; }
.ghead { height: 26px; flex: none; border-bottom: 1px solid #c8c8c8; }
.h0 { background: #f1f1f1; border-right: 1px solid #c8c8c8; }
.h1 { background: #dcdcdc; display: flex; align-items: center; justify-content: space-between; padding: 0 5px 0 5px; box-sizing: border-box; font-size: 12.500px; }
.h1 svg { display: block; }
.h2 { background: #ececec; display: flex; flex-direction: column; gap: 2px; align-items: center; justify-content: center; border-left: 1px solid #c8c8c8; padding-right: 2px; }
.h2 i { width: 2px; height: 2px; background: #666; }
.h3 { background: #ececec; display: flex; align-items: center; padding-left: 4px; font-size: 12.500px; }
.h4 { background: #ececec; border-left: 1px solid #c8c8c8; border-right: 1px solid #c8c8c8; box-sizing: border-box; }
.gbody { flex: 1; min-height: 0; overflow: hidden; }
.grow { height: 20px; font-size: 11.700px; letter-spacing: -.24px; }
.c0 { display: flex; align-items: center; justify-content: flex-end; gap: 1px; padding-right: 1px; border-bottom: 1px solid #c8c8c8; box-sizing: border-box; border-right: 1px solid #c8c8c8; }
.mark { width: 5px; height: 15px; box-sizing: border-box; border: 1px solid #cfcfcf; background: #fff; flex: none; }
.mark.blue { background: #7fb3e6; border-color: #566; }
.c1n { display: flex; align-items: center; border-bottom: 1px solid #c8c8c8; white-space: nowrap; overflow: hidden; box-sizing: border-box; min-width: 0; }
.c1n svg { flex: none; display: block; margin-left: 0; }
.tri-slot { width: 12px; height: 12px; flex: none; display: flex; align-items: center; justify-content: center; margin-right: 4px; margin-left: -5px; }
.tgl { width: 0; height: 0; border-style: solid; border-width: 5px 5px 0; border-color: #aaa transparent transparent; }
.nm { margin: 0 0 2px 6px; line-height: 16px; }
.c2 { border-left: 1px solid #c8c8c8; }
.c3 { border-bottom: 1px solid #c8c8c8; overflow: hidden; white-space: nowrap; padding-left: 3px; line-height: 19px; min-width: 0; box-sizing: border-box; }
.c3.blank { background: #f6f6f6; }
.c4 { display: flex; align-items: center; justify-content: flex-end; padding-right: 4px; border-left: 1px solid #c8c8c8; border-right: 1px solid #c8c8c8; border-bottom: 1px solid #c8c8c8; box-sizing: border-box; }
.grow.sel .c1n { background: #f3f9fd; box-shadow: inset 0 0 0 1px #4c93c3; border-bottom-color: #4c93c3; }
.grow.sel .c3, .grow.sel .c4 { background: #f3f9fd; }
.tscroll { width: 15px; display: flex; flex-direction: column; align-items: center; padding-top: 2px; box-sizing: border-box; background: #fff; }
.tscroll .thumb { width: 8px; height: 90px; background: #c8c8c8; margin: 9px 0 297px; flex: none; }
.hscroll { height: 15px; flex: none; display: flex; align-items: center; padding-left: 6px; position: relative; }
.hthumb { width: 841px; height: 6px; background: #c8c8c8; margin-left: 6px; flex: none; }
.hscroll .tri.right { margin: 0 6px 0 38px; }
.corner { width: 15px; height: 15px; background: #efefef; flex: none; }
.side-btn, .split-btn { position: absolute; width: 9px; height: 30px; border: 1px solid #d0d0d0; background: #f2f2f2; display: flex; align-items: center; justify-content: center; box-sizing: border-box; }
.side-btn { right: 0; top: 262px; }
.split-btn { left: 301px; top: 250px; }

.status { height: 27px; flex: none; background: #e2e3e6; display: flex; align-items: center; padding-left: 834px; position: relative; color: #555; }
.status svg { display: block; flex: none; }
.st-btn { width: 21px; height: 21px; box-sizing: border-box; border: 1px solid #cfcfcf; border-radius: 2px; background: #eee; display: flex; align-items: center; justify-content: center; flex: none; }
.st2 { margin-left: 10px; }
.st3 { margin-left: 12px; }
.st4 { margin-left: 12px; }
.st5 { margin-left: 12px; }
.pct { margin-left: 14px; font-size: 13px; width: 34px; color: #555; flex: none; }
.zm { margin-left: 22px; }
.slider { width: 100px; height: 1px; background: #777; margin-left: 9px; position: relative; flex: none; }
.slider i { position: absolute; left: 3px; top: -6px; width: 5px; height: 13px; background: #666; }
.zp { margin-left: 13px; }
.st6 { margin-left: 20px; }
.st7 { margin-left: 24px; }
.grip { margin-left: 13px; margin-top: 10px; }
.cursor { position: absolute; left: 656px; top: 458px; }
</style>

<style>
html, body { margin: 0; }
</style>
